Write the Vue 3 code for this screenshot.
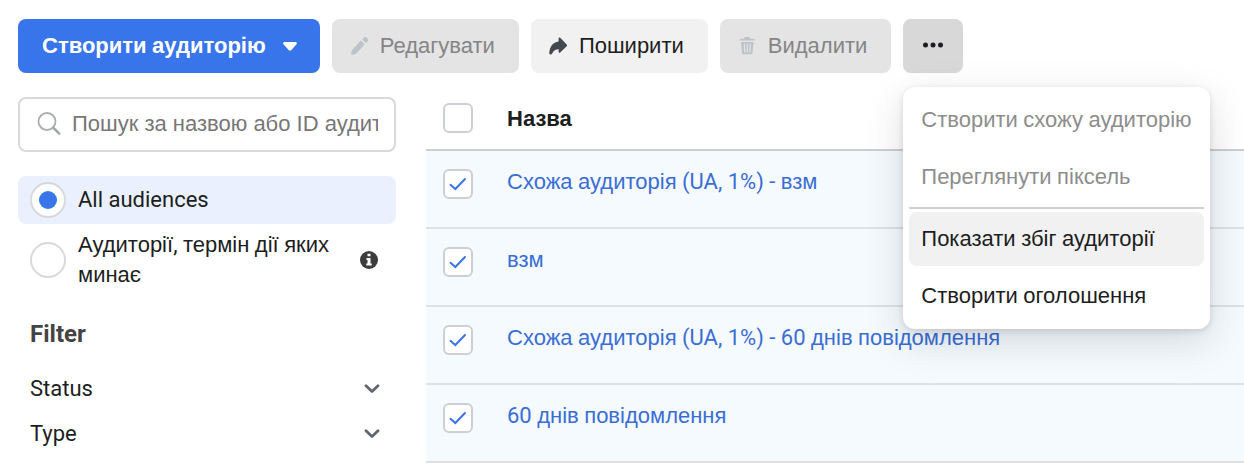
<script setup>
import { h, ref } from 'vue'

const selectedView = ref('all')
const query = ref('')
const allChecked = ref(false)

const audiences = ref([
  { id: 1, name: 'Схожа аудиторія (UA, 1%) - взм', checked: true },
  { id: 2, name: 'взм', checked: true },
  { id: 3, name: 'Схожа аудиторія (UA, 1%) - 60 днів повідомлення', checked: true },
  { id: 4, name: '60 днів повідомлення', checked: true },
])

const filters = ['Status', 'Type']

// Sets Cyrillic words in the base face and everything between them in the Latin face.
function MixedText({ text }) {
  const parts = text.split(/([\u0400-\u04ff]+)/).filter(Boolean)
  return h('span', parts.map((part) =>
    /[\u0400-\u04ff]/.test(part) ? part : h('span', { class: 'latin-run' }, part),
  ))
}
MixedText.props = ['text']
</script>

<template>
  <main class="page">
    <div class="toolbar">
      <button class="btn primary" type="button">
        <MixedText text="Створити аудиторію" />
        <svg width="14" height="9" viewBox="0 0 14 9" aria-hidden="true">
          <path d="M1.5 0h11c1.2 0 1.9 1.3 1 2.3L8.4 8c-.8.9-2 .9-2.8 0L.5 2.3C-.4 1.3.3 0 1.5 0z" fill="#fff" />
        </svg>
      </button>
      <button class="btn" type="button" disabled>
        <svg width="20" height="20" viewBox="0 0 20 20" aria-hidden="true">
          <path d="M10.800 4.600l3.900 3.900-8.400 8.700c-.6.600-1.200.9-2 1.100l-1.700.4c-.8.200-1.500-.5-1.400-1.300l.4-1.800c.2-.8.5-1.400 1-2z" fill="#bec3c9" />
          <path d="M12.200 3.400l1.500-1.500c1-1 2.300-1.100 3.200-.2l.7.700c.9.900.8 2.200-.2 3.200l-1.300 1.600z" fill="#bec3c9" />
        </svg>
        Редагувати
      </button>
      <button class="btn light" type="button">
        <svg width="20" height="20" viewBox="0 0 20 20" aria-hidden="true">
          <path d="M9.6 2.5c0-1 .9-1.3 1.6-.7l6.5 6.700c.5.600.5 1.200 0 1.800l-6.500 6.200c-.7.600-1.600.3-1.600-.7v-2.600c-3.200.1-4.700 1.300-6.500 4.200-.6.900-1.300 1.300-2.100 1-.7-.3-.8-1-.7-1.800.5-6.200 3.600-10.300 9.300-11.200z" fill="#444950" />
        </svg>
        Поширити
      </button>
      <button class="btn" type="button" disabled>
        <svg width="20" height="20" viewBox="0 0 20 20" aria-hidden="true">
          <path d="M2.5 3.700h13.500M7 3l.5-1h3.500l.5 1" fill="none" stroke="#bec3c9" stroke-width="1.800" stroke-linecap="round" />
          <path d="M3 6h12.500l-.9 10.500c-.1 1.200-.8 1.800-1.900 1.800H5.800c-1.100 0-1.800-.6-1.900-1.800z" fill="#bec3c9" />
          <path d="M6.300 8l.4 8M9.300 8v8M12.300 8l-.4 8" stroke="#e4e4e4" stroke-width="1.200" stroke-linecap="round" />
        </svg>
        Видалити
      </button>
      <div class="more">
        <button class="btn more-btn" type="button" aria-label="Більше" aria-expanded="true">
          <svg width="20" height="6" viewBox="0 0 20 6" aria-hidden="true" fill="#1c1e21">
            <circle cx="2.5" cy="3" r="2.5" />
            <circle cx="10" cy="3" r="2.5" />
            <circle cx="17.5" cy="3" r="2.5" />
          </svg>
        </button>
        <div class="menu" role="menu">
          <button type="button" role="menuitem" disabled><MixedText text="Створити схожу аудиторію" /></button>
          <button type="button" role="menuitem" disabled><MixedText text="Переглянути піксель" /></button>
          <hr />
          <button type="button" role="menuitem" class="active"><MixedText text="Показати збіг аудиторії" /></button>
          <button type="button" role="menuitem"><MixedText text="Створити оголошення" /></button>
        </div>
      </div>
    </div>

    <div class="content">
      <aside class="sidebar">
        <label class="search">
          <svg width="24" height="24" viewBox="0 0 24 24" aria-hidden="true">
            <circle cx="10" cy="9.5" r="8.5" fill="none" stroke="#a9adb3" stroke-width="1.8" />
            <path d="M16.2 15.7l6 6" stroke="#a0a5ab" stroke-width="2.4" stroke-linecap="round" />
          </svg>
          <input v-model="query" type="text" placeholder="Пошук за назвою або ID аудиторії" aria-label="Пошук" />
        </label>

        <label class="view" :class="{ selected: selectedView === 'all' }">
          <input v-model="selectedView" type="radio" name="view" value="all" />
          <span class="latin">All audiences</span>
        </label>
        <label class="view" :class="{ selected: selectedView === 'expiring' }">
          <input v-model="selectedView" type="radio" name="view" value="expiring" />
          <MixedText class="view-text" text="Аудиторії, термін дії яких минає" />
          <svg width="18" height="18" viewBox="0 0 18 18" aria-hidden="true">
            <circle cx="9" cy="9" r="9" fill="#3c3c3c" />
            <path d="M7.5 2.8h3v2.400h-3zM6.500 7h4v5.500h1.200v2H6.300v-2h1.200V9h-1z" fill="#fff" />
          </svg>
        </label>

        <h2 class="latin">Filter</h2>
        <button v-for="name in filters" :key="name" class="filter latin" type="button">
          {{ name }}
          <svg width="16" height="10" viewBox="0 0 16 10" aria-hidden="true">
            <path d="M2 1.8L8 7.5l6-5.7" fill="none" stroke="#606770" stroke-width="2.8" stroke-linecap="round" stroke-linejoin="round" />
          </svg>
        </button>
      </aside>

      <table>
        <thead>
          <tr>
            <th class="pick">
              <span class="check"><input v-model="allChecked" type="checkbox" aria-label="Вибрати все" /></span>
            </th>
            <th scope="col">Назва</th>
          </tr>
        </thead>
        <tbody>
          <tr v-for="row in audiences" :key="row.id">
            <td class="pick">
              <span class="check">
                <input v-model="row.checked" type="checkbox" :aria-label="row.name" />
                <svg v-if="row.checked" width="18" height="14" viewBox="0 0 18 14" aria-hidden="true">
                  <path d="M1.5 7.8l4.8 4.200L16 2" fill="none" stroke="#3b75ea" stroke-width="2" stroke-linecap="round" />
                </svg>
              </span>
            </td>
            <td>
              <a href="#"><MixedText :text="row.name" /></a>
            </td>
          </tr>
        </tbody>
      </table>
    </div>
  </main>
</template>

<style>
body {
  margin: 0;
  background: #fff;
}

.latin-run {
  font-family: Roboto, "Liberation Sans", sans-serif;
}
</style>

<style scoped>
.page {
  box-sizing: border-box;
  padding: 19px 0 0 18px;
  font-family: "Liberation Sans", Arial, sans-serif;
  font-size: 22px;
  line-height: 30px;
  color: #1c1e21;
}

.latin {
  font-family: Roboto, "Liberation Sans", sans-serif;
}

button,
input {
  margin: 0;
  font-size: 22px;
  line-height: 30px;
  color: inherit;
}

button:not(.latin),
input {
  font-family: inherit;
}

svg {
  flex: none;
}

.toolbar {
  display: flex;
  gap: 12px;
}

.btn {
  display: flex;
  align-items: center;
  gap: 10px;
  height: 54px;
  padding: 0 24px 0 18px;
  border: 0;
  border-radius: 8px;
  background: #e4e4e4;
  white-space: nowrap;
}

.btn:disabled {
  color: #858585;
}

.btn.light {
  background: #f1f1f1;
}

.btn.primary {
  gap: 17px;
  padding: 0 23px 0 24px;
  background: #3975ea;
  color: #fff;
  font-weight: 700;
}

.more {
  position: relative;
}

.btn.more-btn {
  justify-content: center;
  width: 60px;
  padding: 0 0 2px;
  background: #d8d8d8;
}

.menu {
  position: absolute;
  z-index: 1;
  top: 68px;
  left: 0;
  display: flex;
  flex-direction: column;
  gap: 3px;
  padding: 6px;
  border-radius: 12px;
  background: #fff;
  box-shadow: 0 2px 6px rgba(0, 0, 0, 0.12), 0 12px 40px rgba(0, 0, 0, 0.14);
}

.menu button {
  height: 54px;
  padding: 0 12px;
  border: 0;
  border-radius: 8px;
  background: none;
  text-align: left;
  white-space: nowrap;
}

.menu button:disabled {
  color: #8d8d8d;
}

.menu .active {
  background: #f1f1f1;
}

.menu hr {
  width: 100%;
  height: 2px;
  margin: 0;
  border: 0;
  background: #cccfd5;
}

.content {
  display: flex;
  align-items: flex-start;
  gap: 30px;
  margin-top: 24px;
}

.sidebar {
  flex: none;
  width: 378px;
}

.search {
  box-sizing: border-box;
  display: flex;
  align-items: center;
  gap: 11px;
  height: 55px;
  margin-bottom: 24px;
  padding: 0 16px 1px 17px;
  border: 2px solid #d9d9d9;
  border-radius: 8px;
}

.search input {
  flex: 1;
  min-width: 0;
  padding: 0;
  border: 0;
  outline: 0;
  background: none;
}

.search input::placeholder {
  color: #777;
  opacity: 1;
}

.view {
  display: flex;
  align-items: center;
  gap: 12px;
  min-height: 48px;
  padding: 0 18px 0 12px;
  border-radius: 8px;
}

.view.selected {
  background: #eaf0fd;
}

.view + .view {
  padding-top: 6px;
}

.view input {
  appearance: none;
  box-sizing: border-box;
  display: grid;
  flex: none;
  place-items: center;
  width: 36px;
  height: 36px;
  border: 2px solid #d9d9d9;
  border-radius: 50%;
  background: #fff;
}

.view input:checked::before {
  content: "";
  width: 18px;
  height: 18px;
  border-radius: 50%;
  background: #3975ea;
}

.view-text {
  flex: 1;
}

h2 {
  margin: 29px 0 17px 12px;
  font-size: 24px;
  line-height: 30px;
  font-weight: 700;
  color: #444;
}

.filter {
  display: flex;
  align-items: center;
  justify-content: space-between;
  width: 100%;
  height: 45px;
  padding: 0 16px 0 12px;
  border: 0;
  background: none;
}

table {
  flex: 1;
  border-collapse: separate;
  border-spacing: 0;
}

th,
td {
  box-sizing: border-box;
  padding: 0 18px;
  text-align: left;
}

th {
  height: 54px;
  padding-bottom: 8px;
  border-bottom: 2px solid #ccced2;
}

td {
  height: 78px;
  padding-top: 16px;
  border-bottom: 2px solid #dfe1e4;
  background: #f5faff;
  vertical-align: top;
}

.pick {
  width: 63px;
  padding-left: 17px;
  padding-right: 0;
}

th.pick {
  padding-bottom: 10px;
}

td.pick {
  padding-top: 18px;
}

.check {
  display: grid;
  place-items: center;
  width: 30px;
  height: 30px;
}

.check input,
.check svg {
  grid-area: 1 / 1;
}

.check input {
  appearance: none;
  box-sizing: border-box;
  width: 30px;
  height: 30px;
  border: 2px solid #ccd0d5;
  border-radius: 6px;
  background: #fff;
}

.check svg {
  pointer-events: none;
}

a {
  color: #3a6ed4;
  text-decoration: none;
}
</style>
